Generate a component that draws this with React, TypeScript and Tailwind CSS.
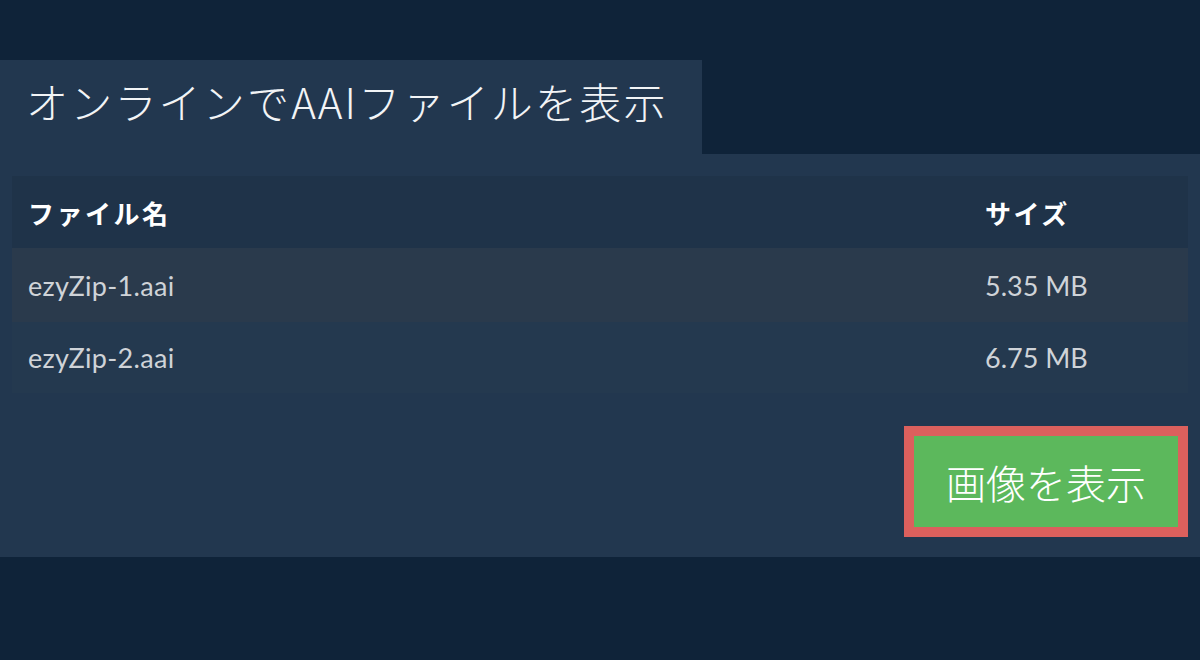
import React from "react";

export default function App() {
  const jp = { fontFamily: '"Noto Sans CJK JP", "Noto Sans", sans-serif' };
  const lato = { fontFamily: 'Lato, "Noto Sans CJK JP", sans-serif' };
  return (
    <div className="w-[1200px] h-[660px] bg-[#0f2339] pt-[60px] overflow-hidden">
      <div className="w-[702px] h-[94px] bg-[#22374f] pl-[26px] pt-[15px]">
        <h1 className="text-[42px] font-extralight text-[#f2f4f6] leading-[52px] tracking-[2.2px]" style={jp}>
          オンラインでAAIファイルを表示
        </h1>
      </div>
      <div className="bg-[#22374f] h-[403px] px-[12px] pt-[22px]">
        <div className="w-full">
          <div className="flex h-[72px] items-center bg-[#1f3349] text-white text-[26px] font-bold tracking-[2.5px]" style={jp}>
            <div className="flex-1 pl-[16px]">ファイル名</div>
            <div className="w-[203px]">サイズ</div>
          </div>
          <div className="flex h-[74px] items-center bg-[#2a3a4c] text-[#cfd3d8] text-[27px] pt-[2px]" style={lato}>
            <div className="flex-1 pl-[16px] tracking-[0.3px]">ezyZip-1.aai</div>
            <div className="w-[203px]">5.35 MB</div>
          </div>
          <div className="flex h-[71px] items-center bg-[#24394f] text-[#cfd3d8] text-[27px] pt-[2px]" style={lato}>
            <div className="flex-1 pl-[16px] tracking-[0.3px]">ezyZip-2.aai</div>
            <div className="w-[203px]">6.75 MB</div>
          </div>
        </div>
        <div className="flex justify-end mt-[33px]">
          <button
            className="w-[284px] h-[111px] border-[10px] border-[#dc605d] bg-[#5cb85c] text-white text-[40px] font-extralight"
            style={jp}
          >
            画像を表示
          </button>
        </div>
      </div>
    </div>
  );
}
